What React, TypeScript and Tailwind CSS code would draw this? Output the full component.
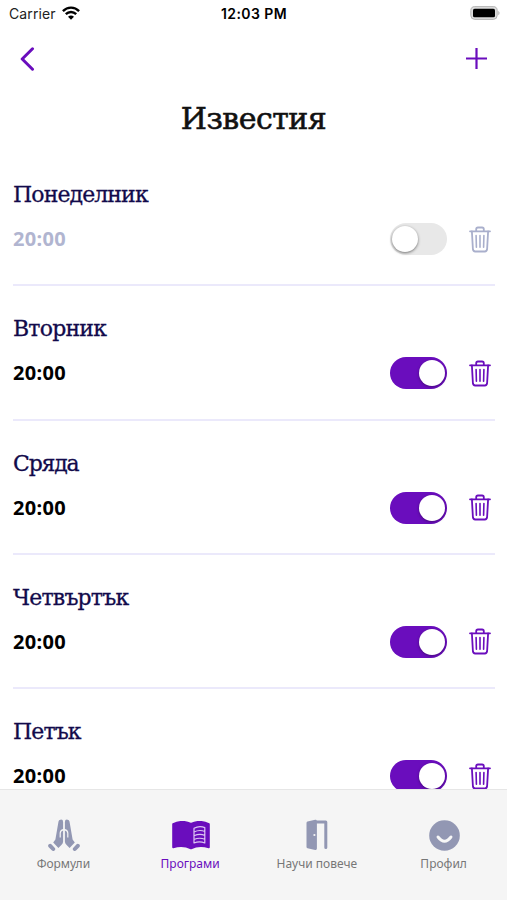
import { useState } from "react";

const serif = "font-['DejaVu_Serif',serif]";

const initialDays = [
    { name: "Понеделник", time: "20:00", enabled: false, spacing: "tracking-[-0.9px]" },
    { name: "Вторник", time: "20:00", enabled: true, spacing: "tracking-[-0.8px]" },
    { name: "Сряда", time: "20:00", enabled: true, spacing: "tracking-[-1.2px]" },
    { name: "Четвъртък", time: "20:00", enabled: true, spacing: "tracking-[-0.8px]" },
    { name: "Петък", time: "20:00", enabled: true, spacing: "tracking-[-0.9px]" },
];

function StatusBar() {
    return (
        <div className="grid h-7 shrink-0 grid-cols-3 items-center pl-[9px] pr-[6px] font-['Inter',sans-serif] text-black">
            <div className="flex items-center gap-[6px]">
                <span className="text-[14px] leading-7 tracking-[0.1px] text-[#222]">Carrier</span>
                <svg className="-mt-[2px]" width="18" height="14" viewBox="0 0 18 14" fill="none" stroke="#000" strokeWidth="2.4">
                    <path d="M0.9 5.1 C5.5 0.5 12.5 0.5 17.1 5.1" />
                    <path d="M3.8 8.2 C6.8 5.3 11.2 5.3 14.2 8.2" />
                    <path d="M6 10.7 Q9 8.2 12 10.7 L9 13.7 Z" fill="#000" stroke="none" />
                </svg>
            </div>
            <span className="whitespace-nowrap pr-[2px] text-center text-[14px] font-semibold leading-7 tracking-[0.4px]">12:03 PM</span>
            <svg className="-mt-[2px] justify-self-end" width="31" height="14" viewBox="0 0 31 14">
                <rect x="0.8" y="0.6" width="26.4" height="12.8" rx="4" fill="#ddd" stroke="#b5b5b5" />
                <rect x="3" y="2.7" width="22" height="8.6" rx="1.6" fill="#000" />
                <path d="M28.4 4.7 Q30.6 7 28.4 9.3 Z" fill="#aaa" />
            </svg>
        </div>
    );
}

function TrashIcon() {
    return (
        <svg width="22" height="27" viewBox="0 0 22 27" fill="none" stroke="currentColor" strokeWidth="1.8" strokeLinecap="round" strokeLinejoin="round">
            <path d="M1 5.3 H21" />
            <path d="M7.2 5 V3.2 Q7.2 1.5 8.9 1.5 H13.1 Q14.8 1.5 14.8 3.2 V5" />
            <path d="M2.9 5.5 L3.9 23.2 Q4.1 25.5 6.2 25.5 H15.8 Q17.9 25.5 18.1 23.2 L19.1 5.5" />
            <path d="M7.1 9.5 L7.4 21.2 M11 9.5 V21.2 M14.9 9.5 L14.6 21.2" strokeWidth="1.6" />
        </svg>
    );
}

function PrayIcon() {
    return (
        <svg width="32" height="33" viewBox="0 0 32 33" fill="#9297b3">
            <path d="M12.4 0.7 Q15.1 0.2 15.1 3 V10 Q11.6 10.7 11.6 14.3 V18.6 H12.8 V14.3 Q12.8 11.9 15.1 11.4 V22.5 Q15.1 24.4 13.6 25.8 L10.4 28.9 L5.2 23.5 L7.4 20.4 L10.5 2.5 Q10.8 1 12.4 0.7 Z" />
            <path d="M19.6 0.7 Q16.9 0.2 16.9 3 V10 Q20.4 10.7 20.4 14.3 V18.6 H19.2 V14.3 Q19.2 11.9 16.9 11.4 V22.5 Q16.9 24.4 18.4 25.8 L21.6 28.9 L26.8 23.5 L24.6 20.4 L21.5 2.5 Q21.2 1 19.6 0.7 Z" />
            <path d="M2.2 26.8 L5.2 30 M29.8 26.8 L26.8 30" stroke="#9297b3" strokeWidth="4" strokeLinecap="round" />
        </svg>
    );
}

function BookIcon() {
    return (
        <svg width="38" height="29" viewBox="0 0 38 29">
            <path d="M1.2 3.2 Q10 -1.2 19 2.8 Q28 -1.2 36.8 3.2 V26.2 Q27 23.4 19 27.3 Q11 23.4 1.2 26.2 Z" fill="#6a0dbd" stroke="#6a0dbd" strokeWidth="2" strokeLinejoin="round" />
            <path d="M22 7.2 Q27.5 4.3 32.8 6.6 V22 Q27.5 19.6 22 22 Z M22 11 Q27.5 8.3 32.8 10.5 M22 14.8 Q27.5 12.3 32.8 14.4 M22 18.5 Q27.5 16.1 32.8 18.3" fill="none" stroke="#dcc5f2" strokeWidth="1.2" strokeLinejoin="round" />
        </svg>
    );
}

function DoorIcon() {
    return (
        <svg width="22" height="32" viewBox="0 0 22 32">
            <path d="M1.5 2.6 L9.2 0.7 Q10.9 0.4 10.9 2 V29.6 Q10.9 31.2 9.2 30.9 L1.5 29.3 Q0.5 29.1 0.5 28 V4 Q0.5 2.9 1.5 2.6 Z" fill="#9297b3" />
            <path d="M11 3 H19.8 V28.4" fill="none" stroke="#9297b3" strokeWidth="3" strokeLinecap="round" strokeLinejoin="round" />
            <circle cx="8.4" cy="16" r="1.1" fill="#f5f5f5" />
        </svg>
    );
}

function SmileIcon() {
    return (
        <svg width="31" height="31" viewBox="0 0 31 31" fill="none">
            <circle cx="15.5" cy="15.5" r="15.3" fill="#9297b3" />
            <path d="M9 17 Q15.5 25.4 22 17" stroke="#f7f7f7" strokeWidth="2.9" strokeLinecap="round" />
        </svg>
    );
}

const tabs = [
    { label: "Формули", icon: <PrayIcon /> },
    { label: "Програми", icon: <BookIcon />, active: true },
    { label: "Научи повече", icon: <DoorIcon /> },
    { label: "Профил", icon: <SmileIcon /> },
];

function Toggle({ on, label, onClick }: { on: boolean; label: string; onClick: () => void }) {
    return (
        <button
            role="switch"
            aria-checked={on}
            aria-label={label}
            onClick={onClick}
            className={`flex h-8 w-[57px] items-center rounded-full ${on ? "justify-end bg-[#6a0dbd] pr-[2px]" : "justify-start bg-[#e8e8e8] pl-[2px]"}`}>
            <span className={`size-[26px] rounded-full bg-white ${on ? "shadow-[0_1px_3px_rgba(0,0,0,0.35)]" : "shadow-[0_1px_3px_rgba(0,0,0,0.5)]"}`} />
        </button>
    );
}

export default function App() {
    const [days, setDays] = useState(initialDays);

    const toggle = (index: number) =>
        setDays(days.map((day, i) => (i === index ? { ...day, enabled: !day.enabled } : day)));

    return (
        <div className="flex h-[900px] w-[507px] flex-col overflow-hidden bg-white">
            <StatusBar />
            <header className="flex h-[62px] shrink-0 items-center justify-between pl-[20px] pr-[20px] text-[#6a0dbd]">
                <button aria-label="Назад">
                    <svg width="15" height="24" viewBox="0 0 15 24" fill="none" stroke="currentColor" strokeWidth="3" strokeLinecap="round" strokeLinejoin="round">
                        <path d="M12.5 1.8 L2.2 12 L12.5 22.2" />
                    </svg>
                </button>
                <button aria-label="Добави">
                    <svg width="22" height="22" viewBox="0 0 22 22" fill="none" stroke="currentColor" strokeWidth="2.2">
                        <path d="M11.5 0 V21 M1 10.5 H22" />
                    </svg>
                </button>
            </header>
            <h1 className={`h-[62px] shrink-0 text-center text-[30px] leading-[58px] tracking-[-0.5px] text-[#111] [-webkit-text-stroke:0.6px_#111] ${serif}`}>Известия</h1>

            <main className="min-h-0 flex-1 overflow-hidden pl-[13px] pr-[12px]">
                {days.map((day, index) => (
                    <section key={day.name} className="h-[134.25px] border-b-2 border-[#ebe9fb] pt-[29px]">
                        <h2 className={`text-[22px] leading-7 text-[#120a4b] [-webkit-text-stroke:0.3px_#120a4b] ${serif} ${day.spacing}`}>{day.name}</h2>
                        <div className="mt-[14px] flex h-8 items-center">
                            <span className={`flex-1 font-['Noto_Sans',sans-serif] text-[20px] font-bold leading-8 tracking-[0.3px] ${day.enabled ? "text-black" : "text-[#b1b5d0]"}`}>{day.time}</span>
                            <Toggle on={day.enabled} label={day.name} onClick={() => toggle(index)} />
                            <button aria-label="Изтрий" className={`ml-[22px] mr-[4px] ${day.enabled ? "text-[#6a0dbd]" : "text-[#a9afcc]"}`}>
                                <TrashIcon />
                            </button>
                        </div>
                    </section>
                ))}
            </main>

            <nav className="grid h-[111px] shrink-0 grid-cols-4 border-t border-[#e6e6e6] bg-[#f5f5f5] pt-[26px]">
                {tabs.map((tab) => (
                    <a key={tab.label} className={`flex flex-col items-center font-['Noto_Sans',sans-serif] text-[12px] ${tab.active ? "text-[#6a0dbd]" : "text-[#777]"}`}>
                        <span className="flex h-[38px] items-center pl-[1px]">{tab.icon}</span>
                        <span className="whitespace-nowrap leading-[20px]">{tab.label}</span>
                    </a>
                ))}
            </nav>
        </div>
    );
}
